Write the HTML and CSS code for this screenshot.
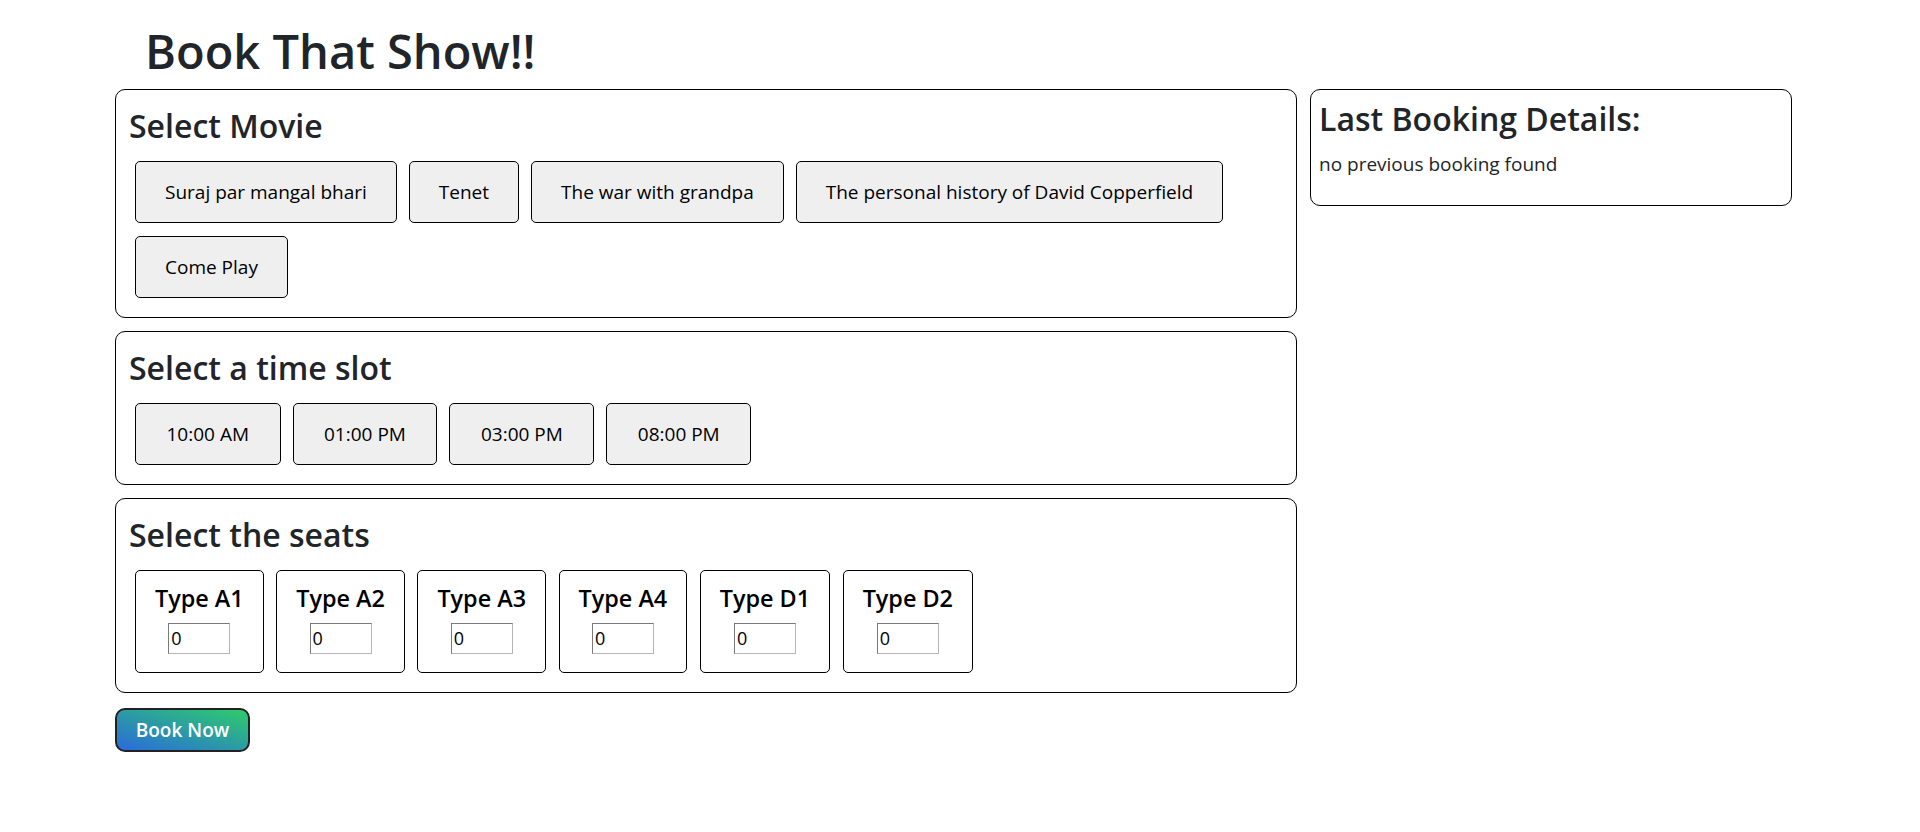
FILE: index.html
```html
<!DOCTYPE html>
<html lang="en">
<head>
<meta charset="utf-8">
<title>Book That Show!!</title>
<link rel="stylesheet" href="styles.css">
</head>
<body>
<div class="page">
  <h1 class="title">Book That Show!!</h1>
  <div class="layout">
    <div class="main">
      <section class="card">
        <h2 class="card-title">Select Movie</h2>
        <div class="options">
          <button class="opt">Suraj par mangal bhari</button>
          <button class="opt">Tenet</button>
          <button class="opt">The war with grandpa</button>
          <button class="opt">The personal history of David Copperfield</button>
          <button class="opt">Come Play</button>
        </div>
      </section>
      <section class="card">
        <h2 class="card-title">Select a time slot</h2>
        <div class="options">
          <button class="opt opt-time">10:00 AM</button>
          <button class="opt opt-time">01:00 PM</button>
          <button class="opt opt-time">03:00 PM</button>
          <button class="opt opt-time">08:00 PM</button>
        </div>
      </section>
      <section class="card">
        <h2 class="card-title">Select the seats</h2>
        <div class="seats">
          <div class="seat"><h4 class="seat-name">Type A1</h4><input class="seat-input" type="number" value="0"></div>
          <div class="seat"><h4 class="seat-name">Type A2</h4><input class="seat-input" type="number" value="0"></div>
          <div class="seat"><h4 class="seat-name">Type A3</h4><input class="seat-input" type="number" value="0"></div>
          <div class="seat"><h4 class="seat-name">Type A4</h4><input class="seat-input" type="number" value="0"></div>
          <div class="seat"><h4 class="seat-name">Type D1</h4><input class="seat-input" type="number" value="0"></div>
          <div class="seat"><h4 class="seat-name">Type D2</h4><input class="seat-input" type="number" value="0"></div>
        </div>
      </section>
      <button class="book">Book Now</button>
    </div>
    <aside class="card side">
      <h2 class="card-title side-title">Last Booking Details:</h2>
      <p class="side-text">no previous booking found</p>
    </aside>
  </div>
</div>
</body>
</html>
```
FILE: styles.css
```css
* { box-sizing: border-box; }

body {
  margin: 0;
  font-family: "Open Sans", "Noto Sans", sans-serif;
  color: #212529;
  background: #fff;
}

.page {
  padding: 23px 0 0 115px;
}

.title {
  margin: 0 0 8px 30px;
  font-size: 47px;
  line-height: 57.6px;
  font-weight: 600;
}

.layout {
  display: flex;
  align-items: flex-start;
  gap: 13px;
}

.main {
  width: 1182px;
  display: flex;
  flex-direction: column;
  align-items: flex-start;
  gap: 13px;
}

.card {
  width: 100%;
  border: 1px solid #000;
  border-radius: 10px;
  padding: 13px;
}

.card-title {
  margin: 0 0 9px;
  padding-top: 2px;
  font-size: 32px;
  line-height: 41px;
  font-weight: 600;
}

.options {
  display: flex;
  flex-wrap: wrap;
  gap: 13px 12px;
  padding: 6px;
}

.opt {
  height: 62px;
  padding: 0 29px;
  font-family: inherit;
  font-size: 19px;
  color: #000;
  background: #efefef;
  border: 1px solid #000;
  border-radius: 5px;
}

.opt-time {
  padding: 0 30.5px;
}

.seats {
  display: flex;
  flex-wrap: wrap;
  gap: 12.5px;
  padding: 6px;
}

.seat {
  height: 103px;
  border: 1px solid #000;
  border-radius: 5px;
  padding: 12px 19px 0;
  display: flex;
  flex-direction: column;
  align-items: center;
}

.seat-name {
  margin: 0 0 10px;
  font-size: 23.4px;
  line-height: 30px;
  font-weight: 600;
  color: #000;
}

.seat-input {
  width: 62px;
  height: 31px;
  padding: 1px 2px;
  font-family: inherit;
  font-size: 18px;
  color: #000;
  border: 1px solid #b5b5b5;
  border-top-color: #7a7a7a;
  border-left-color: #7a7a7a;
  appearance: textfield;
}

.seat-input::-webkit-inner-spin-button,
.seat-input::-webkit-outer-spin-button {
  -webkit-appearance: none;
  margin: 0;
}

.book {
  margin-top: 2px;
  width: 135px;
  height: 44px;
  font-family: inherit;
  font-size: 19px;
  font-weight: 600;
  color: #fff;
  background: linear-gradient(to right top, #2a6bdc, #2ecc6b);
  border: 2px solid #222;
  border-radius: 10px;
}

.side {
  width: 482px;
  padding: 8px;
}

.side-title {
  margin: 0 0 13px;
  padding-top: 0;
}

.side-text {
  margin: 0 0 21px;
  font-size: 19px;
  line-height: 24px;
}
```
